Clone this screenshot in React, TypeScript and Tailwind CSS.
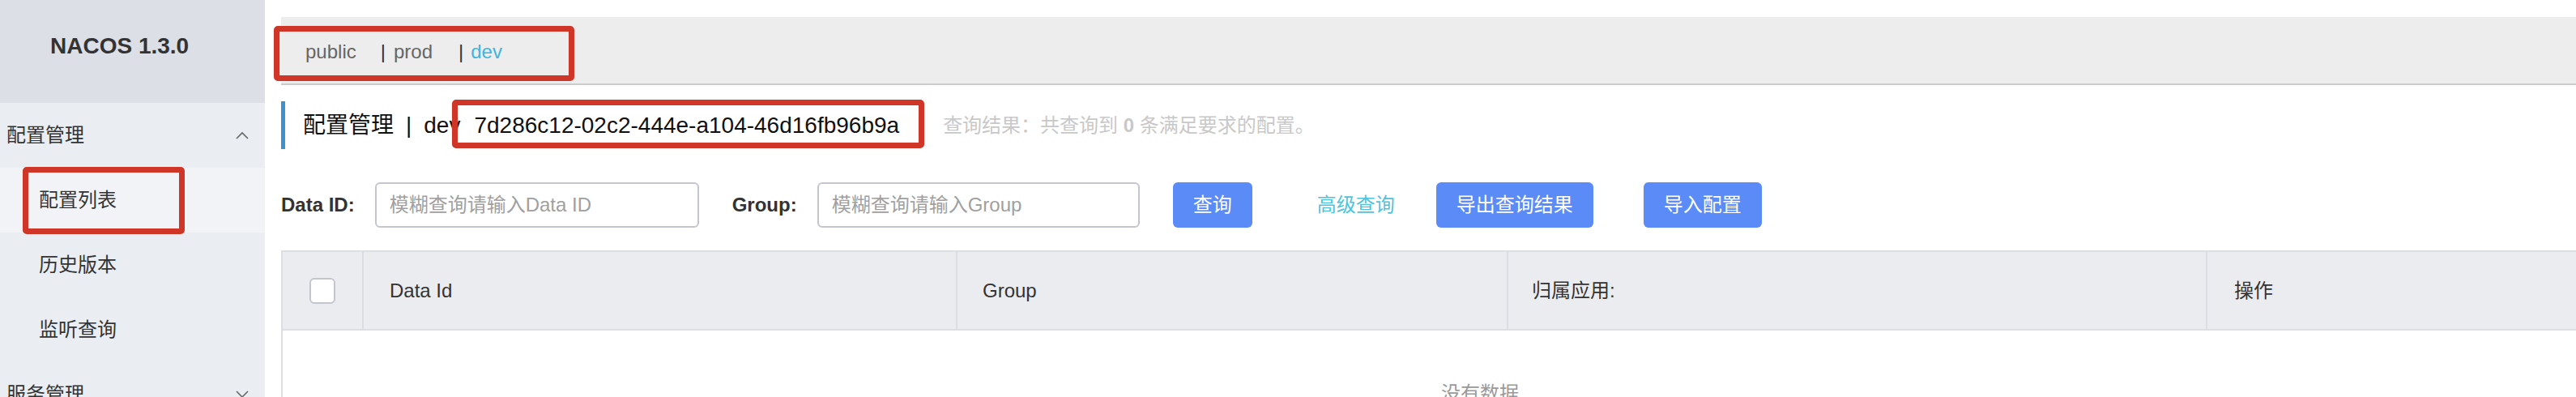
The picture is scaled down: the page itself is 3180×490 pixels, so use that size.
import { ReactNode } from "react";

const Chevron = ({ up }: { up?: boolean }) => (
  <svg width="16" height="10" viewBox="0 0 16 10" fill="none" stroke="#666" strokeWidth="1.6">
    {up ? <polyline points="1,9 8,2 15,9" /> : <polyline points="1,1 8,8 15,1" />}
  </svg>
);

const MenuItem = ({ children, active }: { children: ReactNode; active?: boolean }) => (
  <div className={`relative h-[80px] shrink-0 flex items-center pl-[48px] text-[24px] text-[#333] ${active ? "bg-[#f2f3f7]" : ""}`}>
    {children}
    {active && (
      <div className="absolute left-[28px] top-[-1px] w-[200px] h-[83px] border-[7px] border-[#cf3627] rounded-[5px]" />
    )}
  </div>
);

const Button = ({ children }: { children: ReactNode }) => (
  <button className="h-[56px] px-[25px] rounded-[6px] bg-[#5b8bf7] text-white text-[24px] leading-[24px]">
    {children}
  </button>
);

const App = () => {
  return (
    <div className="flex w-[3180px] h-[490px] overflow-hidden bg-white font-['Liberation_Sans','Noto_Sans_CJK_SC',sans-serif]">
      {/* sidebar */}
      <aside className="w-[327px] shrink-0 bg-[#eaedf1] flex flex-col">
        <div className="h-[127px] shrink-0 bg-[#dcdfe5] pl-[62px] pt-[43px]">
          <span className="text-[28px] leading-[28px] font-bold text-[#333]">NACOS 1.3.0</span>
        </div>
        <div className="h-[80px] shrink-0 flex items-center justify-between pl-[8px] pr-[20px] text-[24px] text-[#333]">
          <span>配置管理</span>
          <Chevron up />
        </div>
        <MenuItem active>配置列表</MenuItem>
        <MenuItem>历史版本</MenuItem>
        <MenuItem>监听查询</MenuItem>
        <div className="h-[80px] shrink-0 flex items-center justify-between pl-[8px] pr-[20px] text-[24px] text-[#333]">
          <span>服务管理</span>
          <Chevron />
        </div>
      </aside>

      {/* main */}
      <main className="pl-[20px] pt-[21px]">
        <div className="w-[2960px]">
          {/* namespaces */}
          <div className="relative h-[84px] bg-[#ededed] border-b-2 border-[#cccccc] pl-[30px] pt-[31px] text-[24px] leading-[24px] flex">
            <span className="text-[#666] mr-[30px]">public</span>
            <span className="text-[#333]">|</span>
            <span className="text-[#666] ml-[10px] mr-[32px]">prod</span>
            <span className="text-[#333]">|</span>
            <span className="text-[#3fb4dc] ml-[9px]">dev</span>
            <div className="absolute left-[-9px] top-[11px] w-[371px] h-[68px] border-[7px] border-[#cf3627] rounded-[5px]" />
          </div>

          {/* title */}
          <div className="relative mt-[20px] h-[59px] flex items-center border-l-[5px] border-[#3c91cf] pl-[22px] text-[#111]">
            <span className="text-[28px] leading-[28px]">配置管理</span>
            <span className="text-[28px] leading-[28px] mx-[15px]">|</span>
            <span className="text-[28px] leading-[28px]">dev</span>
            <span className="text-[28px] leading-[28px] ml-[17px]">7d286c12-02c2-444e-a104-46d16fb96b9a</span>
            <span className="text-[24px] leading-[24px] ml-[54px] text-[#c8c8c8]">
              查询结果：共查询到 <b>0</b> 条满足要求的配置。
            </span>
            <div className="absolute left-[206px] top-[-2px] w-[583px] h-[60px] border-[7px] border-[#cf3627] rounded-[5px]" />
          </div>

          {/* search */}
          <div className="mt-[41px] h-[56px] flex items-center text-[24px]">
            <span className="font-bold text-[#333]">Data ID:</span>
            <div className="ml-[25px] w-[400px] h-[56px] border-2 border-[#c4c6cf] rounded-[6px] flex items-center pl-[16px] text-[#a0a0a0]">
              模糊查询请输入Data ID
            </div>
            <span className="ml-[41px] font-bold text-[#333]">Group:</span>
            <div className="ml-[25px] w-[398px] h-[56px] border-2 border-[#c4c6cf] rounded-[6px] flex items-center pl-[16px] text-[#a0a0a0]">
              模糊查询请输入Group
            </div>
            <div className="ml-[41px]">
              <Button>查询</Button>
            </div>
            <span className="ml-[80px] text-[#4fc3dc]">高级查询</span>
            <div className="ml-[51px]">
              <Button>导出查询结果</Button>
            </div>
            <div className="ml-[62px]">
              <Button>导入配置</Button>
            </div>
          </div>

          {/* table */}
          <div className="mt-[28px] border-2 border-[#dcdee3] text-[24px] text-[#333]">
            <div className="grid grid-cols-[98px_733px_680px_863px_1fr] h-[97px] bg-[#ebecf0] border-b-2 border-[#dcdee3]">
              <div className="flex items-center justify-center">
                <div className="w-[32px] h-[32px] bg-white border-2 border-[#c4c6cf] rounded-[6px]" />
              </div>
              <div className="flex items-center border-l-2 border-[#dcdee3] pl-[32px]">Data Id</div>
              <div className="flex items-center border-l-2 border-[#dcdee3] pl-[31px]">Group</div>
              <div className="flex items-center border-l-2 border-[#dcdee3] pl-[29px]">归属应用:</div>
              <div className="flex items-center border-l-2 border-[#dcdee3] pl-[33px]">操作</div>
            </div>
            <div className="h-[200px] flex justify-center pt-[66px] leading-[24px] text-[#999]">没有数据</div>
          </div>
        </div>
      </main>
    </div>
  );
};

export default App;
